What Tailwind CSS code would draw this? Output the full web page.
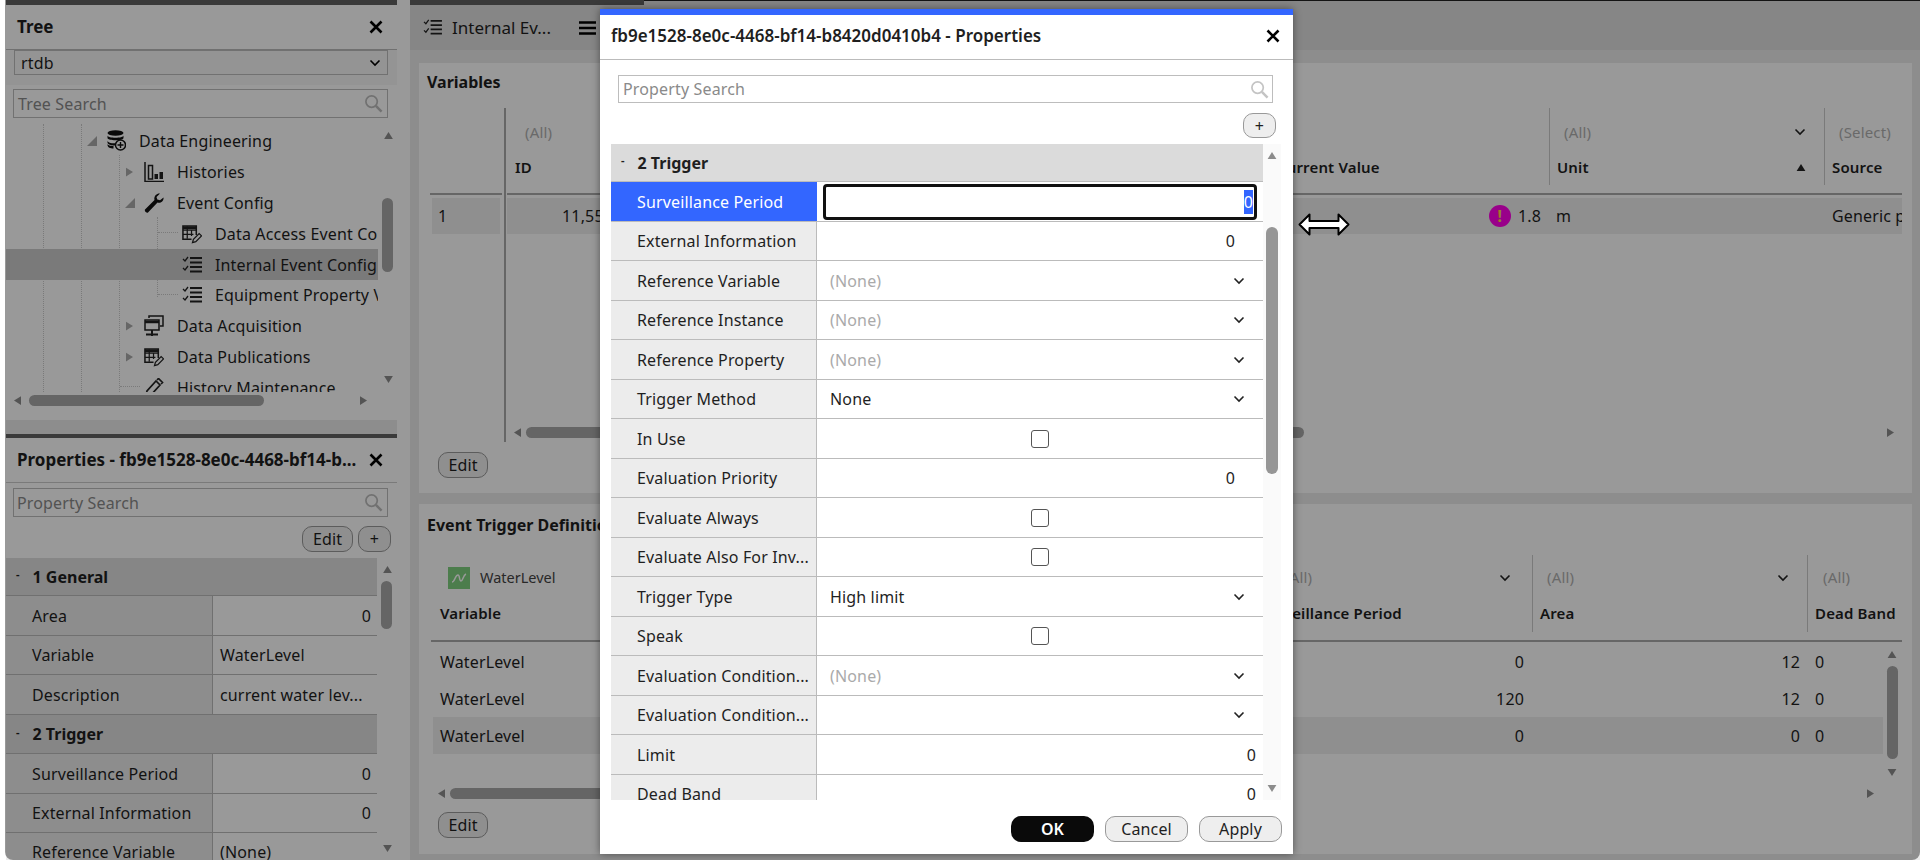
<!DOCTYPE html>
<html lang="en">
<head>
    <meta charset="UTF-8">
    <title>Internal Event Config</title>
    <script src="https://cdn.jsdelivr.net/npm/@tailwindcss/browser@4"></script>
</head>
<body class="bg-white font-['Noto_Sans',sans-serif] text-[16px] tracking-[0.15px] text-[#1f1f1f]">
    <svg class="hidden">
        <symbol id="chev" viewBox="0 0 12 8"><path d="M1.5 1.5 6 6l4.5-4.5" fill="none" stroke="currentColor" stroke-width="1.6"/></symbol>
        <symbol id="search" viewBox="0 0 20 20"><circle cx="8" cy="8" r="6" fill="none" stroke="currentColor" stroke-width="1.8"/><path d="m12.5 12.5 6 6" stroke="currentColor" stroke-width="2.6"/></symbol>
        <symbol id="close" viewBox="0 0 14 14"><path d="m1.5 1.5 11 11m0-11-11 11" stroke="currentColor" stroke-width="2.6"/></symbol>
        <symbol id="up" viewBox="0 0 10 8"><path d="M5 0l5 8H0z" fill="currentColor"/></symbol>
        <symbol id="down" viewBox="0 0 10 8"><path d="M0 0h10L5 8z" fill="currentColor"/></symbol>
        <symbol id="left" viewBox="0 0 8 10"><path d="M8 0v10L0 5z" fill="currentColor"/></symbol>
        <symbol id="right" viewBox="0 0 8 10"><path d="M0 0v10l8-5z" fill="currentColor"/></symbol>
        <symbol id="checks" viewBox="0 0 20 18" fill="none" stroke="currentColor"><path d="m1 3 2 2 3-4M1 12l2 2 3-4" stroke-width="1.3"/><path d="M8 2h12M8 6.500h12M8 11h12M8 15.500h12" stroke-width="2"/></symbol>
        <symbol id="tablepen" viewBox="0 0 21 20" fill="none" stroke="currentColor"><path d="M15 11V1.500H1V15.500H10" stroke-width="1.6"/><path d="M1 6h14M1 10.500h11M5.500 2v13M10 6v6" stroke-width="1.300"/><path d="M1 2h14v3H1z" fill="currentColor" stroke="none"/><path d="m11 19 1-3.500 6-6 2.500 2.500-6 6z" stroke-width="1.300"/></symbol>
    </svg>

    <div class="relative flex h-[860px] w-[1920px] overflow-hidden">
        <!-- left side panels -->
        <div class="ml-[6px] flex w-[391px] flex-col bg-[#ebebeb]">
            <section class="flex h-[420px] flex-col border-t-[5px] border-[#616161] bg-white">
                <div class="flex h-[45px] shrink-0 items-center justify-between border-b border-[#bbb] pl-[11px] pr-[14px]">
                    <span class="text-[17px] font-bold tracking-normal">Tree</span>
                    <svg class="size-[14px] text-black"><use href="#close"/></svg>
                </div>
                <div class="flex h-[35px] shrink-0 items-start bg-[#f7f7f7] pl-[8px] pr-[9px]">
                    <div class="flex h-[25px] w-full items-center justify-between border border-[#bdbdbd] pl-[6px] pr-[6px]">rtdb<svg class="h-[8px] w-[12px] text-black"><use href="#chev"/></svg></div>
                </div>
                <div class="flex h-[39px] shrink-0 items-start pl-[7px] pr-[9px]">
                    <div class="mt-[4px] flex h-[29px] w-full items-center justify-between border border-[#bdbdbd] pl-[4px] pr-[4px] text-[#8a8a8a]">Tree Search<svg class="size-[19px] text-[#bdbdbd]"><use href="#search"/></svg></div>
                </div>
                <div class="relative flex h-[268px] shrink-0">
                    <div class="relative w-[372px] overflow-hidden pt-[1px]">
                        <span class="absolute left-[37px] top-0 h-full border-l border-dotted border-[#ccc]"></span>
                        <span class="absolute left-[75px] top-0 h-full border-l border-dotted border-[#ccc]"></span>
                        <span class="absolute left-[113px] top-[31px] h-[237px] border-l border-dotted border-[#ccc]"></span>
                        <span class="absolute left-[151px] top-[93px] h-[80px] border-l border-dotted border-[#ccc]"></span>
                        <span class="absolute left-[152px] top-[108px] w-[20px] border-t border-dotted border-[#ccc]"></span>
                        <span class="absolute left-[152px] top-[170px] w-[20px] border-t border-dotted border-[#ccc]"></span>
                        <span class="absolute left-[114px] top-[262px] w-[20px] border-t border-dotted border-[#ccc]"></span>

                        <div class="relative flex h-[31px] items-center pl-[81px]">
                            <svg class="mr-[10px] size-[10px] shrink-0 text-[#aaa]" viewBox="0 0 10 10"><path d="M10 0v10H0z" fill="currentColor"/></svg>
                            <svg class="mr-[13px] h-[21px] w-[19px] shrink-0 text-[#111]" viewBox="0 0 19 21"><ellipse cx="8.500" cy="3" rx="8" ry="2.800" fill="currentColor"/><path d="M.5 5.500c0 3 16 3 16 0v2.500c0 3-16 3-16 0zM.5 10.500c0 3 9 3.500 11 2l-4 3c-3 0-7-1-7-3zM.5 15c0 2.500 3 3.500 6 3.500V16c-3 0-6-1-6-2z" fill="currentColor"/><circle cx="13.500" cy="15" r="5" fill="#fff" stroke="currentColor" stroke-width="1.500"/><path d="M13.500 12v6m-3-3h6" stroke="currentColor" stroke-width="1.400"/></svg>
                            Data Engineering
                        </div>
                        <div class="relative flex h-[31px] items-center pl-[120px]">
                            <svg class="mr-[11px] h-[14px] w-[7px] shrink-0 text-[#aaa]"><use href="#right"/></svg>
                            <svg class="mr-[13px] size-[20px] shrink-0 text-[#222]" viewBox="0 0 20 20"><path d="M1 0v19.500h19" fill="none" stroke="currentColor" stroke-width="1.500"/><path d="M4.500 3.500h4V17h-4z" fill="none" stroke="currentColor" stroke-width="1.500"/><path d="M10.500 12h3.500v5h-3.500zM15.500 10H19v7h-3.500z" fill="currentColor"/></svg>
                            Histories
                        </div>
                        <div class="relative flex h-[31px] items-center pl-[119px]">
                            <svg class="mr-[9px] size-[10px] shrink-0 text-[#aaa]" viewBox="0 0 10 10"><path d="M10 0v10H0z" fill="currentColor"/></svg>
                            <svg class="mr-[13px] size-[20px] shrink-0 text-[#111]" viewBox="0 0 20 20"><path d="M19.500 4.500c.5 3-2.500 6-6 5L4 19.500c-1 1-4-1.500-3-3l9.500-9.500c-1-3.500 2-7 5.500-6.500L12.500 4l.8 2.500 2.700.7z" fill="currentColor"/></svg>
                            Event Config
                        </div>
                        <div class="relative flex h-[31px] items-center pl-[176px]">
                            <svg class="mr-[13px] h-[20px] w-[20px] shrink-0 text-[#222]"><use href="#tablepen"/></svg>
                            <span class="whitespace-nowrap">Data Access Event Config</span>
                        </div>
                        <div class="relative flex h-[31px] items-center bg-[#cbcbcb] pl-[176px]">
                            <svg class="mr-[13px] h-[18px] w-[20px] shrink-0 text-[#222]"><use href="#checks"/></svg>
                            <span class="whitespace-nowrap">Internal Event Config</span>
                        </div>
                        <div class="relative flex h-[30px] items-center pl-[176px]">
                            <svg class="mr-[13px] h-[18px] w-[20px] shrink-0 text-[#222]"><use href="#checks"/></svg>
                            <span class="whitespace-nowrap">Equipment Property Values</span>
                        </div>
                        <div class="relative flex h-[31px] items-center pl-[120px]">
                            <svg class="mr-[11px] h-[14px] w-[7px] shrink-0 text-[#aaa]"><use href="#right"/></svg>
                            <svg class="mr-[13px] h-[21px] w-[20px] shrink-0 text-[#222]" viewBox="0 0 20 21" fill="none" stroke="currentColor" stroke-width="1.500"><path d="M5 3V1h14v10h-3"/><path d="M1 5h14v10H1z"/><path d="M1 7h14" stroke-width="2.500"/><path d="M8 15v3M2 19.500h12M8 18v3" stroke-width="2"/></svg>
                            Data Acquisition
                        </div>
                        <div class="relative flex h-[31px] items-center pl-[120px]">
                            <svg class="mr-[11px] h-[14px] w-[7px] shrink-0 text-[#aaa]"><use href="#right"/></svg>
                            <svg class="mr-[13px] h-[20px] w-[20px] shrink-0 text-[#222]"><use href="#tablepen"/></svg>
                            Data Publications
                        </div>
                        <div class="relative flex h-[31px] items-center pl-[138px]">
                            <svg class="mr-[13px] h-[20px] w-[20px] shrink-0 text-[#222]" viewBox="0 0 20 20"><path d="M2 17l1-4L12 3l4 4-9 10zM13 2l1.500-1.500 4 4L17 6" fill="none" stroke="currentColor" stroke-width="1.700"/></svg>
                            History Maintenance
                        </div>
                    </div>
                    <!-- tree vertical scrollbar -->
                    <div class="relative w-[19px]">
                        <svg class="absolute left-[6px] top-[8px] h-[7px] w-[9px] text-[#8c8c8c]"><use href="#up"/></svg>
                        <div class="absolute left-[4px] top-[74px] h-[74px] w-[11px] rounded-full bg-[#a8a8a8]"></div>
                        <svg class="absolute left-[6px] top-[252px] h-[7px] w-[9px] text-[#8c8c8c]"><use href="#down"/></svg>
                    </div>
                </div>
                <div class="flex h-[17px] shrink-0 items-center pl-[8px]">
                    <svg class="h-[9px] w-[7px] text-[#8c8c8c]"><use href="#left"/></svg>
                    <div class="ml-[8px] h-[11px] w-[235px] rounded-full bg-[#a8a8a8]"></div>
                    <svg class="ml-[96px] h-[9px] w-[7px] text-[#8c8c8c]"><use href="#right"/></svg>
                </div>
            </section>

            <section class="mt-[14px] flex min-h-0 flex-1 flex-col overflow-hidden border-t-[4px] border-[#616161] bg-white">
                <div class="flex h-[45px] shrink-0 items-center justify-between border-b border-[#ccc] pl-[11px] pr-[14px]">
                    <span class="whitespace-nowrap text-[17px] font-bold tracking-normal">Properties - fb9e1528-8e0c-4468-bf14-b...</span>
                    <svg class="size-[14px] text-black"><use href="#close"/></svg>
                </div>
                <div class="flex h-[33px] shrink-0 pl-[7px] pr-[9px] pt-[5px]">
                    <div class="flex h-[29px] w-full items-center justify-between border border-[#bdbdbd] pl-[3px] pr-[4px] text-[#8a8a8a]">Property Search<svg class="size-[19px] text-[#bdbdbd]"><use href="#search"/></svg></div>
                </div>
                <div class="flex h-[42px] shrink-0 items-start justify-end gap-[5px] pr-[6px] pt-[10px]">
                    <div class="flex h-[26px] w-[51px] items-center justify-center rounded-[10px] border border-[#999] bg-[#eee]">Edit</div>
                    <div class="flex h-[26px] w-[33px] items-center justify-center rounded-[10px] border border-[#999] bg-[#eee]">+</div>
                </div>
                <div class="flex min-h-0 flex-1">
                    <div class="w-[371px]">
                        <div class="flex h-[38px] items-center border-b border-[#bbb] bg-[#e0e0e0] pl-[10px] font-bold tracking-normal"><span class="-mt-[4px] text-[11px]">-</span><span class="ml-[13px]">1 General</span></div>
                        <div class="grid h-[40px] grid-cols-[207px_164px] border-b border-[#bbb]"><div class="flex items-center border-r border-[#bbb] bg-[#ececec] pl-[26px]">Area</div><div class="flex items-center justify-end pr-[6px]">0</div></div>
                        <div class="grid h-[39px] grid-cols-[207px_164px] border-b border-[#bbb]"><div class="flex items-center border-r border-[#bbb] bg-[#ececec] pl-[26px]">Variable</div><div class="flex items-center pl-[7px]">WaterLevel</div></div>
                        <div class="grid h-[40px] grid-cols-[207px_164px] border-b border-[#bbb]"><div class="flex items-center border-r border-[#bbb] bg-[#ececec] pl-[26px]">Description</div><div class="flex items-center whitespace-nowrap pl-[7px]">current water lev...</div></div>
                        <div class="flex h-[39px] items-center border-b border-[#bbb] bg-[#e0e0e0] pl-[10px] font-bold tracking-normal"><span class="-mt-[4px] text-[11px]">-</span><span class="ml-[13px]">2 Trigger</span></div>
                        <div class="grid h-[40px] grid-cols-[207px_164px] border-b border-[#bbb]"><div class="flex items-center border-r border-[#bbb] bg-[#ececec] pl-[26px]">Surveillance Period</div><div class="flex items-center justify-end pr-[6px]">0</div></div>
                        <div class="grid h-[39px] grid-cols-[207px_164px] border-b border-[#bbb]"><div class="flex items-center border-r border-[#bbb] bg-[#ececec] pl-[26px]">External Information</div><div class="flex items-center justify-end pr-[6px]">0</div></div>
                        <div class="grid h-[39px] grid-cols-[207px_164px] border-b border-[#bbb]"><div class="flex items-center border-r border-[#bbb] bg-[#ececec] pl-[26px]">Reference Variable</div><div class="flex items-center pl-[7px]">(None)</div></div>
                    </div>
                    <div class="relative w-[20px]">
                        <svg class="absolute left-[6px] top-[8px] h-[7px] w-[9px] text-[#8c8c8c]"><use href="#up"/></svg>
                        <div class="absolute left-[4px] top-[23px] h-[48px] w-[11px] rounded-full bg-[#a8a8a8]"></div>
                        <svg class="absolute left-[6px] top-[287px] h-[7px] w-[9px] text-[#8c8c8c]"><use href="#down"/></svg>
                    </div>
                </div>
            </section>
        </div>

        <!-- main area -->
        <div class="ml-[13px] flex w-[1510px] flex-col bg-[#ebebeb]">
            <div class="flex h-[50px] shrink-0 items-start bg-[#e0e0e0]">
                <div class="flex h-[50px] w-[234px] items-center border-t-[5px] border-[#616161] pl-[13px]">
                    <svg class="mr-[10px] h-[17px] w-[19px] text-[#222]"><use href="#checks"/></svg>
                    <span class="text-[17px] tracking-normal">Internal Ev...</span>
                    <svg class="ml-[28px] h-[14px] w-[17px] text-black" viewBox="0 0 17 14"><path d="M0 1.500h17M0 7h17M0 12.500h17" stroke="currentColor" stroke-width="2.600"/></svg>
                </div>
                <div class="h-[1px] flex-1 bg-[#222]"></div>
            </div>
            <div class="flex flex-col gap-[11px] pl-[9px] pr-[8px] pt-[13px]">
                <!-- Variables -->
                <section class="flex h-[430px] flex-col bg-white pl-[11px] pr-[10px]">
                    <div class="flex h-[45px] shrink-0 items-start pt-[7px] font-bold tracking-normal">
                        <span class="-ml-[3px]">Variables</span>
                    </div>
                    <div class="flex h-[334px] shrink-0">
                        <div class="w-[74px] shrink-0">
                            <div class="h-[85px]"></div>
                            <div class="h-[2px] w-[72px] bg-[#aaa]"></div>
                            <div class="ml-[2px] mt-[3px] flex h-[36px] w-[68px] items-center bg-[#eee] pl-[6px]">1</div>
                        </div>
                        <div class="w-[2px] shrink-0 bg-[#aaa]"></div>
                        <div class="flex min-w-0 flex-1 flex-col pl-[1px]">
                            <div class="flex h-[85px] shrink-0">
                                <div class="w-[160px] shrink-0 pl-[8px]">
                                    <div class="flex h-[48px] items-center justify-between pl-[10px] pr-[48px] text-[15px] text-[#b0b0b0]">(All)<svg class="h-[8px] w-[12px] text-[#222]"><use href="#chev"/></svg></div>
                                    <div class="flex h-[22px] items-center text-[15px] font-semibold">ID</div>
                                </div>
                                <div class="flex-1"></div>
                                <div class="w-[284px] shrink-0">
                                    <div class="h-[48px]"></div>
                                    <div class="flex h-[22px] items-center whitespace-nowrap pl-[12px] text-[15px] font-semibold">Current Value</div>
                                </div>
                                <div class="h-[77px] w-[275px] shrink-0 border-l border-[#ccc] pl-[7px]">
                                    <div class="flex h-[48px] items-center justify-between pl-[7px] pr-[18px] text-[15px] text-[#b0b0b0]">(All)<svg class="h-[8px] w-[12px] text-[#222]"><use href="#chev"/></svg></div>
                                    <div class="flex h-[22px] items-center justify-between pr-[18px] text-[15px] font-semibold">Unit<svg class="h-[7px] w-[10px] text-[#222]"><use href="#up"/></svg></div>
                                </div>
                                <div class="h-[77px] w-[78px] shrink-0 overflow-hidden border-l border-[#ccc] pl-[7px]">
                                    <div class="flex h-[48px] items-center pl-[7px] text-[15px] text-[#b0b0b0]">(Select)</div>
                                    <div class="flex h-[22px] items-center text-[15px] font-semibold">Source</div>
                                </div>
                            </div>
                            <div class="h-[2px] shrink-0 bg-[#aaa]"></div>
                            <div class="mt-[3px] flex h-[36px] shrink-0 bg-[#eee] pl-[2px]">
                                <div class="flex w-[104px] shrink-0 items-center justify-end">11,550</div>
                                <div class="flex flex-1 items-center justify-end gap-[7px] pr-[8px]">
                                    <span class="flex size-[22px] items-center justify-center rounded-full bg-[#ff00e6] font-bold text-[#ffd54a]">!</span>1.8
                                </div>
                                <div class="flex w-[275px] shrink-0 items-center pl-[7px]">m</div>
                                <div class="flex w-[78px] shrink-0 items-center overflow-hidden whitespace-nowrap pl-[8px]">Generic process</div>
                            </div>
                            <div class="mb-[1px] mt-auto flex h-[17px] items-center pl-[7px] pr-[8px] text-[#8c8c8c]">
                                <svg class="h-[11px] w-[7px]"><use href="#left"/></svg>
                                <div class="ml-[5px] h-[11px] w-[778px] rounded-full bg-[#a8a8a8]"></div>
                                <svg class="ml-auto h-[11px] w-[7px]"><use href="#right"/></svg>
                            </div>
                        </div>
                    </div>
                    <div class="ml-[8px] mt-[10px] flex h-[26px] w-[50px] items-center justify-center rounded-[10px] border border-[#999] bg-[#eee]">Edit</div>
                </section>

                <!-- Event Trigger Definitions -->
                <section class="flex h-[350px] flex-col bg-white pl-[12px] pr-[10px]">
                    <div class="-ml-[4px] h-[51px] shrink-0 whitespace-nowrap pt-[9px] font-bold tracking-normal">Event Trigger Definitions</div>
                    <div class="flex h-[85px] shrink-0">
                        <div class="w-[814px] shrink-0 pl-[9px]">
                            <div class="flex h-[45px] items-center pl-[8px] text-[14.500px] tracking-normal text-[#444]">
                                <span class="mr-[10px] flex size-[22px] items-center justify-center bg-[#7fd17f]">
                                    <svg class="h-[10px] w-[16px] text-white" viewBox="0 0 16 10"><path d="M1 9c3 0 3-7 6-7 2 0 1 6 3 6s2-6 5-7" fill="none" stroke="currentColor" stroke-width="1.500"/></svg>
                                </span>WaterLevel
                            </div>
                            <div class="flex h-[26px] items-center text-[15px] font-semibold">Variable</div>
                        </div>
                        <div class="w-[287px] shrink-0 pr-[8px]">
                            <div class="flex h-[45px] items-center justify-between pl-[40px] pr-[13px] text-[15px] text-[#b0b0b0]">(All)<svg class="h-[8px] w-[12px] text-[#222]"><use href="#chev"/></svg></div>
                            <div class="flex h-[26px] items-center whitespace-nowrap pl-[14px] text-[15px] font-semibold">Surveillance Period</div>
                        </div>
                        <div class="h-[77px] w-[275px] shrink-0 border-l border-[#ccc] pl-[7px]">
                            <div class="flex h-[45px] items-center justify-between pl-[7px] pr-[18px] text-[15px] text-[#b0b0b0]">(All)<svg class="h-[8px] w-[12px] text-[#222]"><use href="#chev"/></svg></div>
                            <div class="flex h-[26px] items-center text-[15px] font-semibold">Area</div>
                        </div>
                        <div class="h-[77px] flex-1 border-l border-[#ccc] pl-[7px]">
                            <div class="flex h-[45px] items-center pl-[8px] text-[15px] text-[#b0b0b0]">(All)</div>
                            <div class="flex h-[26px] items-center whitespace-nowrap text-[15px] font-semibold">Dead Band</div>
                        </div>
                    </div>
                    <div class="h-[2px] shrink-0 bg-[#aaa]"></div>
                    <div class="flex h-[143px] shrink-0">
                        <div class="w-[1452px] pl-[2px] pt-[1px]">
                            <div class="grid h-[37px] grid-cols-[812px_287px_275px_76px] items-center"><span class="pl-[7px]">WaterLevel</span><span class="pr-[8px] text-right">0</span><span class="pr-[7px] text-right">12</span><span class="pl-[8px]">0</span></div>
                            <div class="grid h-[37px] grid-cols-[812px_287px_275px_76px] items-center"><span class="pl-[7px]">WaterLevel</span><span class="pr-[8px] text-right">120</span><span class="pr-[7px] text-right">12</span><span class="pl-[8px]">0</span></div>
                            <div class="grid h-[37px] grid-cols-[812px_287px_275px_76px] items-center bg-[#eee]"><span class="pl-[7px]">WaterLevel</span><span class="pr-[8px] text-right">0</span><span class="pr-[7px] text-right">0</span><span class="pl-[8px]">0</span></div>
                        </div>
                        <div class="relative flex-1 text-[#8c8c8c]">
                            <svg class="absolute left-[4px] top-[9px] h-[7px] w-[10px]"><use href="#up"/></svg>
                            <div class="absolute left-[4px] top-[24px] h-[93px] w-[11px] rounded-full bg-[#a8a8a8]"></div>
                            <svg class="absolute left-[4px] top-[127px] h-[7px] w-[10px]"><use href="#down"/></svg>
                        </div>
                    </div>
                    <div class="flex h-[17px] shrink-0 items-center pl-[7px] pr-[28px] text-[#8c8c8c]">
                        <svg class="h-[11px] w-[7px]"><use href="#left"/></svg>
                        <div class="ml-[5px] h-[11px] w-[800px] rounded-full bg-[#a8a8a8]"></div>
                        <svg class="ml-auto h-[11px] w-[7px]"><use href="#right"/></svg>
                    </div>
                    <div class="ml-[7px] mt-[10px] flex h-[26px] w-[50px] items-center justify-center rounded-[10px] border border-[#999] bg-[#eee]">Edit</div>
                </section>
            </div>
        </div>

        <!-- dim layer -->
        <div class="absolute inset-y-0 left-[5px] right-0 rounded-bl-[8px] rounded-br-[8px] bg-black/40"></div>

        <!-- dialog -->
        <div class="absolute left-[600px] top-[9px] z-10 flex h-[845px] w-[693px] flex-col bg-white shadow-[0_0_8px_rgba(0,0,0,0.45)]">
            <div class="h-[6px] shrink-0 bg-[#3366ff]"></div>
            <div class="flex h-[45px] shrink-0 items-center justify-between border-b border-[#bbb] pb-[2px] pl-[11px] pr-[13px]">
                <span class="text-[17px] font-semibold tracking-normal">fb9e1528-8e0c-4468-bf14-b8420d0410b4 - Properties</span>
                <svg class="size-[14px] text-black"><use href="#close"/></svg>
            </div>
            <div class="ml-[18px] mr-[20px] mt-[15px] flex h-[28px] shrink-0 items-center justify-between border border-[#bdbdbd] pl-[4px] pr-[3px] text-[#8a8a8a]">Property Search<svg class="size-[19px] text-[#c4c4c4]"><use href="#search"/></svg></div>
            <div class="mr-[17px] mt-[10px] flex h-[25px] w-[33px] shrink-0 items-center justify-center self-end rounded-[10px] border border-[#999] bg-[#eee]">+</div>
            <div class="mt-[6px] flex h-[656px] shrink-0 pl-[11px]">
                <div class="w-[652px] overflow-hidden">
                    <div class="flex h-[38px] items-center border-b border-[#bbb] bg-[#dbdbdb] pl-[10px] font-bold tracking-normal"><span class="-mt-[4px] text-[11px]">-</span><span class="ml-[13px]">2 Trigger</span></div>
                    <div class="grid h-[40px] grid-cols-[206px_446px] border-b border-[#bbb]"><div class="flex items-center bg-[#3366ff] pl-[26px] text-white">Surveillance Period</div><div class="flex items-center justify-end pr-[6px]"><div class="flex h-[36px] w-[434px] items-center justify-end rounded-[4px] border-[3px] border-[#111] pr-[1px]"><span class="bg-[#3366ff] text-white">0</span></div></div></div>
                    <div class="grid h-[39px] grid-cols-[206px_446px] border-b border-[#bbb]"><div class="flex items-center border-r border-[#bbb] bg-[#ececec] pl-[26px]">External Information</div><div class="flex items-center justify-end pr-[28px]">0</div></div>
                    <div class="grid h-[40px] grid-cols-[206px_446px] border-b border-[#bbb]"><div class="flex items-center border-r border-[#bbb] bg-[#ececec] pl-[26px]">Reference Variable</div><div class="flex items-center justify-between pl-[13px] pr-[18px] text-[#aaa]">(None)<svg class="h-[8px] w-[12px] text-[#222]"><use href="#chev"/></svg></div></div>
                    <div class="grid h-[39px] grid-cols-[206px_446px] border-b border-[#bbb]"><div class="flex items-center border-r border-[#bbb] bg-[#ececec] pl-[26px]">Reference Instance</div><div class="flex items-center justify-between pl-[13px] pr-[18px] text-[#aaa]">(None)<svg class="h-[8px] w-[12px] text-[#222]"><use href="#chev"/></svg></div></div>
                    <div class="grid h-[40px] grid-cols-[206px_446px] border-b border-[#bbb]"><div class="flex items-center border-r border-[#bbb] bg-[#ececec] pl-[26px]">Reference Property</div><div class="flex items-center justify-between pl-[13px] pr-[18px] text-[#aaa]">(None)<svg class="h-[8px] w-[12px] text-[#222]"><use href="#chev"/></svg></div></div>
                    <div class="grid h-[39px] grid-cols-[206px_446px] border-b border-[#bbb]"><div class="flex items-center border-r border-[#bbb] bg-[#ececec] pl-[26px]">Trigger Method</div><div class="flex items-center justify-between pl-[13px] pr-[18px]">None<svg class="h-[8px] w-[12px] text-[#222]"><use href="#chev"/></svg></div></div>
                    <div class="grid h-[40px] grid-cols-[206px_446px] border-b border-[#bbb]"><div class="flex items-center border-r border-[#bbb] bg-[#ececec] pl-[26px]">In Use</div><div class="flex items-center justify-center"><span class="size-[18px] rounded-[3px] border border-[#555]"></span></div></div>
                    <div class="grid h-[39px] grid-cols-[206px_446px] border-b border-[#bbb]"><div class="flex items-center border-r border-[#bbb] bg-[#ececec] pl-[26px]">Evaluation Priority</div><div class="flex items-center justify-end pr-[28px]">0</div></div>
                    <div class="grid h-[40px] grid-cols-[206px_446px] border-b border-[#bbb]"><div class="flex items-center border-r border-[#bbb] bg-[#ececec] pl-[26px]">Evaluate Always</div><div class="flex items-center justify-center"><span class="size-[18px] rounded-[3px] border border-[#555]"></span></div></div>
                    <div class="grid h-[39px] grid-cols-[206px_446px] border-b border-[#bbb]"><div class="flex items-center whitespace-nowrap border-r border-[#bbb] bg-[#ececec] pl-[26px]">Evaluate Also For Inv...</div><div class="flex items-center justify-center"><span class="size-[18px] rounded-[3px] border border-[#555]"></span></div></div>
                    <div class="grid h-[40px] grid-cols-[206px_446px] border-b border-[#bbb]"><div class="flex items-center border-r border-[#bbb] bg-[#ececec] pl-[26px]">Trigger Type</div><div class="flex items-center justify-between pl-[13px] pr-[18px]">High limit<svg class="h-[8px] w-[12px] text-[#222]"><use href="#chev"/></svg></div></div>
                    <div class="grid h-[39px] grid-cols-[206px_446px] border-b border-[#bbb]"><div class="flex items-center border-r border-[#bbb] bg-[#ececec] pl-[26px]">Speak</div><div class="flex items-center justify-center"><span class="size-[18px] rounded-[3px] border border-[#555]"></span></div></div>
                    <div class="grid h-[40px] grid-cols-[206px_446px] border-b border-[#bbb]"><div class="flex items-center whitespace-nowrap border-r border-[#bbb] bg-[#ececec] pl-[26px]">Evaluation Condition...</div><div class="flex items-center justify-between pl-[13px] pr-[18px] text-[#aaa]">(None)<svg class="h-[8px] w-[12px] text-[#222]"><use href="#chev"/></svg></div></div>
                    <div class="grid h-[39px] grid-cols-[206px_446px] border-b border-[#bbb]"><div class="flex items-center whitespace-nowrap border-r border-[#bbb] bg-[#ececec] pl-[26px]">Evaluation Condition...</div><div class="flex items-center justify-end pr-[18px]"><svg class="h-[8px] w-[12px] text-[#222]"><use href="#chev"/></svg></div></div>
                    <div class="grid h-[40px] grid-cols-[206px_446px] border-b border-[#bbb]"><div class="flex items-center border-r border-[#bbb] bg-[#ececec] pl-[26px]">Limit</div><div class="flex items-center justify-end pr-[7px]">0</div></div>
                    <div class="grid h-[39px] grid-cols-[206px_446px] border-b border-[#bbb]"><div class="flex items-center border-r border-[#bbb] bg-[#ececec] pl-[26px]">Dead Band</div><div class="flex items-center justify-end pr-[7px]">0</div></div>
                </div>
                <div class="relative w-[18px] bg-[#fafafa] text-[#8c8c8c]">
                    <svg class="absolute left-[4px] top-[8px] h-[7px] w-[10px]"><use href="#up"/></svg>
                    <div class="absolute left-[3px] top-[83px] h-[247px] w-[12px] rounded-full bg-[#969696]"></div>
                    <svg class="absolute left-[4px] top-[641px] h-[7px] w-[10px]"><use href="#down"/></svg>
                </div>
            </div>
            <div class="mr-[11px] mt-[16px] flex justify-end gap-[11px]">
                <div class="flex h-[26px] w-[83px] items-center justify-center rounded-[10px] bg-[#0a0a0a] font-semibold text-white">OK</div>
                <div class="flex h-[26px] w-[83px] items-center justify-center rounded-[10px] border border-[#999] bg-[#eee]">Cancel</div>
                <div class="flex h-[26px] w-[83px] items-center justify-center rounded-[10px] border border-[#999] bg-[#eee]">Apply</div>
            </div>
        </div>

        <!-- resize cursor -->
        <svg class="absolute left-[1298px] top-[213px] z-20 h-[23px] w-[52px]" viewBox="0 0 52 23"><path d="M1.500 11.500 11.500 1.500V8h29V1.500l10 10-10 10V15h-29v6.500z" fill="#fff" stroke="#000" stroke-width="2" stroke-linejoin="round"/></svg>
    </div>
</body>
</html>
